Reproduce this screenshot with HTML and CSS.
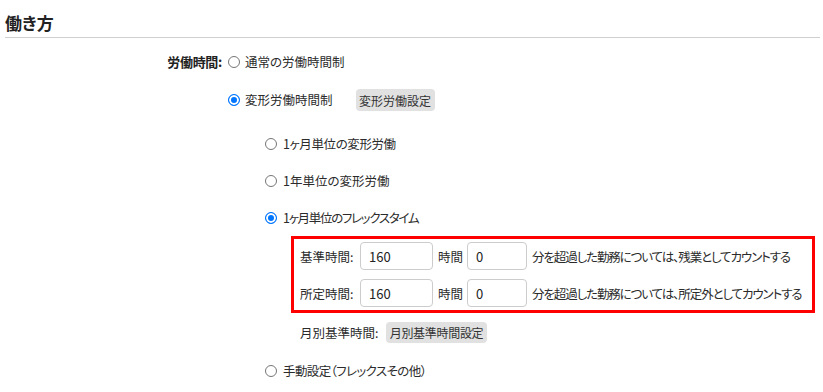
FILE: index.html
```html
<!DOCTYPE html>
<html lang="ja">
<head>
<meta charset="utf-8">
<title>働き方</title>
<link rel="stylesheet" href="styles.css">
</head>
<body>
<div class="page">
  <h2 class="section-title">働き方</h2>
  <div class="field">
    <div class="field-label">労働時間:</div>
    <div class="field-body">
      <label class="opt main-row">
        <input type="radio" name="wt" class="radio">
        <span>通常の労働時間制</span>
      </label>
      <div class="opt main-row row-2">
        <label class="opt">
          <input type="radio" name="wt" class="radio" checked>
          <span>変形労働時間制</span>
        </label>
        <button type="button" class="btn btn-henkei">変形労働設定</button>
      </div>
      <div class="sub">
        <label class="opt sub-row first">
          <input type="radio" name="hk" class="radio">
          <span class="tight-1">1ヶ月単位の変形労働</span>
        </label>
        <label class="opt sub-row">
          <input type="radio" name="hk" class="radio">
          <span>1年単位の変形労働</span>
        </label>
        <label class="opt sub-row">
          <input type="radio" name="hk" class="radio" checked>
          <span class="tight-3">1ヶ月単位のフレックスタイム</span>
        </label>
        <div class="flex-box">
          <div class="flex-line">
            <span class="fl-label">基準時間:</span>
            <input type="text" class="inp inp-h" value="160">
            <span class="fl-unit">時間</span>
            <input type="text" class="inp inp-m" value="0">
            <span class="fl-text">分を超過した勤務については、残業としてカウントする</span>
          </div>
          <div class="flex-line">
            <span class="fl-label">所定時間:</span>
            <input type="text" class="inp inp-h" value="160">
            <span class="fl-unit">時間</span>
            <input type="text" class="inp inp-m" value="0">
            <span class="fl-text">分を超過した勤務については、所定外としてカウントする</span>
          </div>
        </div>
        <div class="monthly">
          <span class="monthly-label">月別基準時間:</span>
          <button type="button" class="btn btn-monthly">月別基準時間設定</button>
        </div>
        <label class="opt sub-row last">
          <input type="radio" name="hk" class="radio">
          <span class="tight-2">手動設定（フレックスその他）</span>
        </label>
      </div>
    </div>
  </div>
</div>
</body>
</html>
```

FILE: styles.css
```css
html, body {
  margin: 0;
  padding: 0;
  background: #fff;
}
body {
  font-family: "Noto Sans CJK JP", "Noto Sans", sans-serif;
  font-size: 12.5px;
  color: #2b2b2b;
  font-feature-settings: "palt";
}
.page {
  padding: 0 3px 0 5px;
}
.section-title {
  margin: 0;
  padding: 11px 0 2px;
  font-size: 17px;
  line-height: 24px;
  font-weight: bold;
  color: #222;
  border-bottom: 1px solid #cfcfcf;
}
.field {
  display: flex;
  align-items: flex-start;
  margin-top: 14px;
}
.field-label {
  width: 217px;
  text-align: right;
  font-weight: bold;
  font-size: 13px;
  color: #222;
  line-height: 20px;
  flex: none;
  padding-right: 6px;
  letter-spacing: -0.3px;
}
.field-body {
  display: flex;
  flex-direction: column;
  align-items: flex-start;
}
.opt {
  display: flex;
  align-items: center;
  gap: 5px;
  line-height: 20px;
  height: 20px;
  white-space: nowrap;
}
.radio {
  appearance: none;
  -webkit-appearance: none;
  width: 12px;
  height: 12px;
  margin: 0;
  border: 1px solid #767676;
  border-radius: 50%;
  background: #fff;
  flex: none;
}
.radio:checked {
  border-color: #0075ff;
  background: #0075ff;
  box-shadow: inset 0 0 0 2px #fff;
}
.tight-1 {
  letter-spacing: -0.4px;
}
.tight-2 {
  letter-spacing: -0.6px;
}
.tight-3 {
  letter-spacing: -1.3px;
}
.row-2 {
  margin-top: 17px;
  height: 22px;
  gap: 23px;
}
.btn {
  font-family: inherit;
  font-size: 12px;
  font-feature-settings: "palt";
  color: #333;
  background: #e1e1e1;
  border: none;
  border-radius: 4px;
  padding: 0 3px;
  line-height: 21px;
  height: 22px;
  cursor: pointer;
  white-space: nowrap;
  text-align: center;
}
.btn-henkei {
  width: 79px;
}
.sub {
  display: flex;
  flex-direction: column;
  align-items: flex-start;
  padding-left: 37px;
}
.sub-row {
  gap: 6px;
  margin-top: 17px;
}
.sub-row.first {
  margin-top: 23px;
}
.sub-row.last {
  margin-top: 18px;
}
.flex-box {
  margin-top: 8px;
  margin-left: 26px;
  width: 524px;
  box-sizing: border-box;
  border: 3px solid #ff0000;
  padding: 3px 6px;
  display: flex;
  flex-direction: column;
  gap: 9px;
}
.flex-line {
  display: flex;
  align-items: center;
  height: 28px;
  white-space: nowrap;
}
.fl-label {
  width: 55px;
  margin-right: 5px;
}
.inp {
  box-sizing: border-box;
  height: 28px;
  border: 1px solid #cccccc;
  border-radius: 4px;
  padding: 0 8px;
  font-family: inherit;
  font-size: 13px;
  color: #222;
  background: #fff;
  outline: none;
}
.inp-h {
  width: 73px;
}
.inp-m {
  width: 60px;
}
.fl-unit {
  width: 25px;
  margin: 0 4px 0 5px;
}
.fl-text {
  margin-left: 5px;
  letter-spacing: -1.1px;
}
.monthly {
  display: flex;
  align-items: center;
  gap: 4px;
  margin-top: 9px;
  margin-left: 35px;
  height: 21px;
}
.monthly-label {
  width: 82px;
}
.btn-monthly {
  height: 21px;
  line-height: 20px;
  width: 101px;
  letter-spacing: -0.3px;
}
```
